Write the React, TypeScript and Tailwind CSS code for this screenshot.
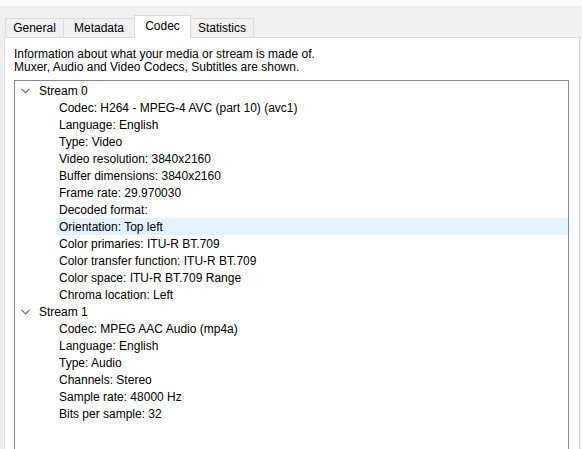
import React from 'react';

interface IStream {
    title: string;
    props: string[];
}

const streams: IStream[] = [
    {
        title: 'Stream 0',
        props: [
            'Codec: H264 - MPEG-4 AVC (part 10) (avc1)',
            'Language: English',
            'Type: Video',
            'Video resolution: 3840x2160',
            'Buffer dimensions: 3840x2160',
            'Frame rate: 29.970030',
            'Decoded format:',
            'Orientation: Top left',
            'Color primaries: ITU-R BT.709',
            'Color transfer function: ITU-R BT.709',
            'Color space: ITU-R BT.709 Range',
            'Chroma location: Left',
        ],
    },
    {
        title: 'Stream 1',
        props: [
            'Codec: MPEG AAC Audio (mp4a)',
            'Language: English',
            'Type: Audio',
            'Channels: Stereo',
            'Sample rate: 48000 Hz',
            'Bits per sample: 32',
        ],
    },
];

const tabs = [
    { name: 'General', w: 'w-[59px]' },
    { name: 'Metadata', w: 'w-[72px]' },
    { name: 'Codec', w: 'w-[57px]' },
    { name: 'Statistics', w: 'w-[64px]' },
];

const Chevron = (): JSX.Element => (
    <svg width="9" height="6" viewBox="0 0 9 6" className="ml-[6px] mr-[9px]">
        <path d="M0.5 0.8 L4.5 4.8 L8.5 0.8" fill="none" stroke="#606060" strokeWidth="1.1" />
    </svg>
);

export default function App(): JSX.Element {
    return (
        <div
            className="w-[582px] h-[449px] overflow-hidden bg-[#f0f0f0] text-[12px] text-black"
            style={{ fontFamily: '"Segoe UI", "Liberation Sans", Arial, sans-serif' }}
        >
            <div className="h-[6px] bg-[#fbfbfb]" />
            <div className="flex items-end h-[32px] pl-[5px] relative z-10">
                {tabs.map((t, i) =>
                    t.name === 'Codec' ? (
                        <div
                            key={t.name}
                            className={`${t.w} -ml-px h-[23px] flex items-center justify-center bg-white border border-b-0 border-[#d9d9d9] pb-[2px]`}
                        >
                            {t.name}
                        </div>
                    ) : (
                        <div
                            key={t.name}
                            className={`${t.w} ${i > 0 ? '-ml-px' : ''} h-[19px] mb-[1px] flex items-center justify-center bg-[#f0f0f0] border border-b-0 border-[#d9d9d9]`}
                        >
                            {t.name}
                        </div>
                    )
                )}
            </div>
            <div className="ml-[4px] w-[576px] h-[420px] -mt-[1px] bg-white border border-[#d9d9d9] pt-[10px] pl-[9px]">
                <div className="leading-[13px]">
                    <div>Information about what your media or stream is made of.</div>
                    <div>Muxer, Audio and Video Codecs, Subtitles are shown.</div>
                </div>
                <div className="mt-[6px] w-[555px] h-[400px] border border-[#828790] py-px">
                    {streams.map((s) => (
                        <div key={s.title}>
                            <div className="h-[17px] flex items-center">
                                <Chevron />
                                <span>{s.title}</span>
                            </div>
                            {s.props.map((p) => (
                                <div
                                    key={p}
                                    className={`h-[17px] flex items-center ml-[41px] pl-[3px] ${
                                        p.startsWith('Orientation') ? 'bg-[#e5f3ff]' : ''
                                    }`}
                                >
                                    {p}
                                </div>
                            ))}
                        </div>
                    ))}
                </div>
            </div>
        </div>
    );
}
